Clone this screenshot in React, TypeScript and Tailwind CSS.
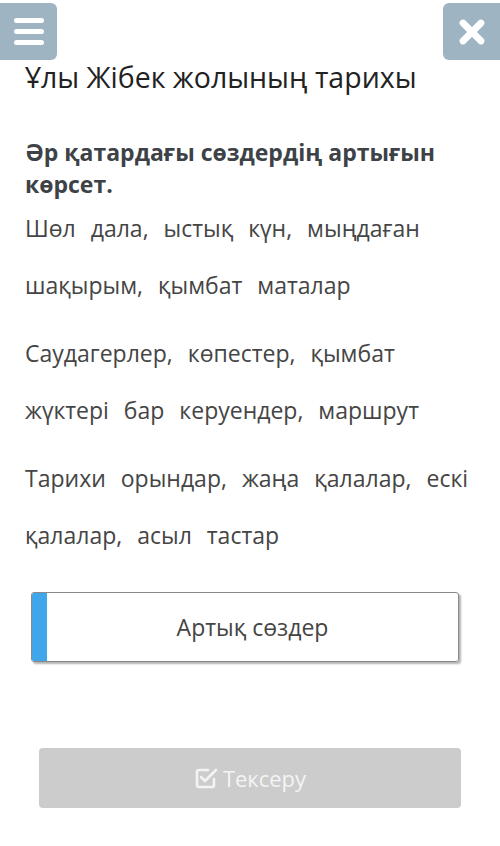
import { X } from "lucide-react";

const rows = [
  ["Шөл дала, ыстық күн, мыңдаған", "шақырым, қымбат маталар"],
  ["Саудагерлер, көпестер, қымбат", "жүктері бар керуендер, маршрут"],
  ["Тарихи орындар, жаңа қалалар, ескі", "қалалар, асыл тастар"],
];

function CheckSquare() {
  return (
    <svg width="24" height="24" viewBox="0 0 24 24" fill="none" stroke="currentColor" strokeWidth="2.6" strokeLinecap="round" strokeLinejoin="round">
      <path d="M20 13v6a2 2 0 0 1-2 2H5a2 2 0 0 1-2-2V6a2 2 0 0 1 2-2h9" />
      <path d="M7 11l4 4L22 4" />
    </svg>
  );
}

export default function App() {
  return (
    <div className="min-h-[846px] w-[500px] bg-white font-['Open_Sans',sans-serif]">
      <div className="flex items-start justify-between pt-[3px]">
        <button className="flex h-[57px] w-[57px] flex-col items-center justify-center gap-[6px] rounded-r-[6px] bg-[#9fb4c3]">
          <span className="h-[5px] w-[30px] rounded-full bg-white" />
          <span className="h-[5px] w-[30px] rounded-full bg-white" />
          <span className="h-[5px] w-[30px] rounded-full bg-white" />
        </button>
        <button className="flex h-[57px] w-[57px] items-center justify-center rounded-l-[6px] bg-[#9fb4c3] text-white">
          <X size={36} strokeWidth={4.5} />
        </button>
      </div>

      <h1 className="pl-[25px] text-[28.5px] leading-[34px] text-[#222]">Ұлы Жібек жолының тарихы</h1>

      <p className="mt-[42px] pl-[25px] pr-[20px] text-[23px] font-bold leading-[32px] text-[#3d4247]">
        Әр қатардағы сөздердің артығын көрсет.
      </p>

      <div className="flex flex-col gap-[12px] pl-[25px]">
        {rows.map((r, i) => (
          <div key={i} className="whitespace-nowrap text-[23px] leading-[56.5px] text-[#454545] [word-spacing:9px]">
            <div>{r[0]}</div>
            <div>{r[1]}</div>
          </div>
        ))}
      </div>

      <div className="mx-[31px] mt-[29px] flex h-[70px] w-[428px] overflow-hidden rounded-[3px] border border-[#8a8a8a] shadow-[2px_2px_2px_rgba(0,0,0,0.3)]">
        <div className="w-[15px] bg-[#3fa7e9]" />
        <div className="flex flex-1 items-center justify-center text-[23px] text-[#444]">Артық сөздер</div>
      </div>

      <button className="mx-[39px] mt-[86px] flex h-[60px] w-[422px] items-center justify-center gap-[5px] rounded-[4px] bg-[#cccccc] text-[22px] text-[#f4f4f4]">
        <CheckSquare />
        <span>Тексеру</span>
      </button>
    </div>
  );
}
